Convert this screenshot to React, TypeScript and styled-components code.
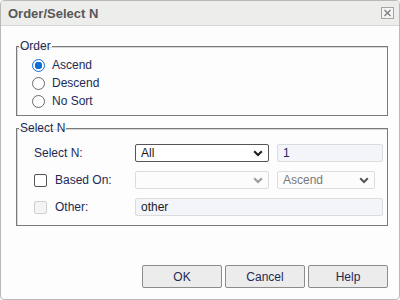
import React, { ReactElement } from 'react'
import styled, { createGlobalStyle } from 'styled-components'

const GlobalStyle = createGlobalStyle`
  html, body {
    margin: 0;
    padding: 0;
    background: #ffffff;
  }
  body {
    font-family: "Liberation Sans", Arial, sans-serif;
    font-size: 12px;
  }
`

const Dialog = styled.div`
  box-sizing: border-box;
  width: 400px;
  height: 300px;
  border: 1px solid #b9b9b9;
  border-radius: 4px;
  background: #fcfdfc;
  display: flex;
  flex-direction: column;
  overflow: hidden;
`

const TitleBar = styled.div`
  box-sizing: border-box;
  height: 25px;
  flex: none;
  display: flex;
  align-items: center;
  justify-content: space-between;
  padding: 0 4px 0 7px;
  background: #ededeb;
  border-bottom: 1px solid #d6d6d6;
`

const Title = styled.div`
  font-weight: bold;
  font-size: 13px;
  color: #575757;
`

const CloseButton = styled.div`
  box-sizing: border-box;
  width: 13px;
  height: 12px;
  border: 1px solid #a4a4a4;
  background: #f4f4f4;
  display: flex;
  align-items: center;
  justify-content: center;
  margin-right: 1px;
`

const Body = styled.div`
  flex: 1;
  display: flex;
  flex-direction: column;
  padding: 13px 11px 11px 15px;
`

const Group = styled.fieldset`
  margin: 0 0 5px 0;
  padding: 0;
  border: 1px solid #7a7a7a;
  box-shadow: inset 1px 1px 0 #d8d8d8;
  min-width: 0;
`

const Legend = styled.legend`
  margin-left: 2px;
  padding: 0 1px;
  line-height: 15px;
  font-size: 12px;
  color: #1d2a55;
`

const RadioList = styled.div`
  display: flex;
  flex-direction: column;
  padding: 2px 0 5px 15px;
`

const RadioRow = styled.label`
  display: flex;
  align-items: center;
  height: 18px;
  gap: 7px;
  color: #1d2a55;
`

const RadioDot = styled.span<{ $checked?: boolean }>`
  box-sizing: border-box;
  width: 13px;
  height: 13px;
  border-radius: 50%;
  border: 1px solid ${p => (p.$checked ? '#0b6fd8' : '#6a6a6a')};
  background: ${p => (p.$checked ? 'radial-gradient(circle, #0b6fd8 0 3.5px, #ffffff 4px)' : '#ffffff')};
`

const Rows = styled.div`
  display: flex;
  flex-direction: column;
  gap: 9px;
  padding: 8px 0 9px 17px;
`

const Row = styled.div`
  display: flex;
  align-items: center;
  height: 18px;
`

const LabelCell = styled.div`
  width: 101px;
  display: flex;
  align-items: center;
  gap: 8px;
  color: #1d2a55;
`

const Check = styled.span<{ $disabled?: boolean }>`
  box-sizing: border-box;
  width: 13px;
  height: 13px;
  border-radius: 2px;
  border: 1px solid ${p => (p.$disabled ? '#d0d0d0' : '#555555')};
  background: ${p => (p.$disabled ? '#f4f4f6' : '#ffffff')};
`

const SelectBox = styled.div<{ $w: number; $active?: boolean; $muted?: boolean }>`
  box-sizing: border-box;
  width: ${p => p.$w}px;
  height: 18px;
  display: flex;
  align-items: center;
  justify-content: space-between;
  padding: 0 5px 0 5px;
  border: 1px solid ${p => (p.$active ? '#555555' : '#dcdcdc')};
  border-radius: 2px;
  background: ${p => (p.$active ? '#ffffff' : '#fcfcfc')};
  color: ${p => (p.$muted ? '#7a7a7a' : '#1b1b1b')};
`

const TextBox = styled.div<{ $w: number; $color?: string }>`
  box-sizing: border-box;
  width: ${p => p.$w}px;
  height: 18px;
  display: flex;
  align-items: center;
  padding: 0 5px;
  border: 1px solid #dcdcdc;
  border-radius: 2px;
  background: #f4f5fb;
  color: ${p => p.$color || '#1b1b1b'};
`

const Gap = styled.div`
  width: 8px;
  flex: none;
`

const Spacer = styled.div`
  flex: 1;
`

const ButtonBar = styled.div`
  display: flex;
  justify-content: flex-end;
  gap: 3px;
`

const Button = styled.button`
  box-sizing: border-box;
  width: 80px;
  height: 23px;
  border: 1px solid #8c8c8c;
  border-radius: 2px;
  background: #ececec;
  font-family: "Liberation Sans", Arial, sans-serif;
  font-size: 12px;
  color: #1d2a55;
  padding: 0;
`

function Chevron({ color }: { color: string }): ReactElement {
  return (
    <svg width="10" height="7" viewBox="0 0 10 7">
      <path d="M1.2 1.2 L5 5 L8.8 1.2" fill="none" stroke={color} strokeWidth="2" />
    </svg>
  )
}

export default function App(): ReactElement {
  return (
    <>
      <GlobalStyle />
      <Dialog>
        <TitleBar>
          <Title>Order/Select N</Title>
          <CloseButton>
            <svg width="9" height="8" viewBox="0 0 9 8">
              <path d="M1.5 1 L7.5 7 M7.5 1 L1.5 7" stroke="#7c7c7c" strokeWidth="1.3" />
            </svg>
          </CloseButton>
        </TitleBar>
        <Body>
          <Group>
            <Legend>Order</Legend>
            <RadioList>
              <RadioRow><RadioDot $checked />Ascend</RadioRow>
              <RadioRow><RadioDot />Descend</RadioRow>
              <RadioRow><RadioDot />No Sort</RadioRow>
            </RadioList>
          </Group>
          <Group>
            <Legend>Select N</Legend>
            <Rows>
              <Row>
                <LabelCell>Select N:</LabelCell>
                <SelectBox $w={134} $active>
                  All
                  <Chevron color="#1b1b1b" />
                </SelectBox>
                <Gap />
                <TextBox $w={106} $color="#1d2a55">1</TextBox>
              </Row>
              <Row>
                <LabelCell><Check />Based On:</LabelCell>
                <SelectBox $w={134}>
                  <span />
                  <Chevron color="#9a9a9a" />
                </SelectBox>
                <Gap />
                <SelectBox $w={98} $muted>
                  Ascend
                  <Chevron color="#555555" />
                </SelectBox>
              </Row>
              <Row>
                <LabelCell><Check $disabled />Other:</LabelCell>
                <TextBox $w={248}>other</TextBox>
              </Row>
            </Rows>
          </Group>
          <Spacer />
          <ButtonBar>
            <Button>OK</Button>
            <Button>Cancel</Button>
            <Button>Help</Button>
          </ButtonBar>
        </Body>
      </Dialog>
    </>
  )
}
